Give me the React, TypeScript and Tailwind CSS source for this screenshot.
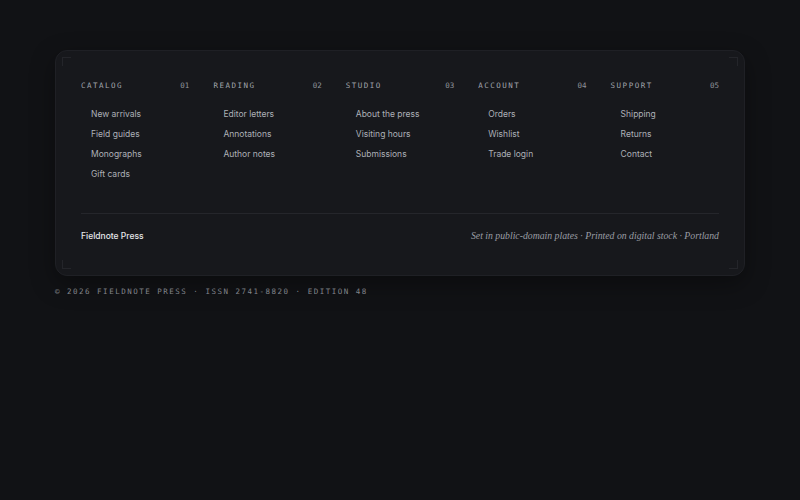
const columns = [
  { title: "Catalog", num: "01", links: ["New arrivals", "Field guides", "Monographs", "Gift cards"] },
  { title: "Reading", num: "02", links: ["Editor letters", "Annotations", "Author notes"] },
  { title: "Studio", num: "03", links: ["About the press", "Visiting hours", "Submissions"] },
  { title: "Account", num: "04", links: ["Orders", "Wishlist", "Trade login"] },
  { title: "Support", num: "05", links: ["Shipping", "Returns", "Contact"] },
];

const mono = "font-['DejaVu_Sans_Mono',monospace]";

export default function App() {
  return (
    <div className="min-h-[500px] w-full bg-[#111215] px-[55px] pt-[50px] font-['Inter',sans-serif]">
      <footer className="relative rounded-xl border border-[#1f2025] bg-[#17181c] px-[25px] pt-[30px] pb-[32px] shadow-[0_8px_24px_rgba(0,0,0,0.35)]">
        {/* corner marks */}
        <span className="absolute left-[6px] top-[6px] h-[9px] w-[9px] border-l border-t border-[#24252a]" />
        <span className="absolute right-[6px] top-[6px] h-[9px] w-[9px] border-r border-t border-[#24252a]" />
        <span className="absolute bottom-[6px] left-[6px] h-[9px] w-[9px] border-b border-l border-[#24252a]" />
        <span className="absolute bottom-[6px] right-[6px] h-[9px] w-[9px] border-b border-r border-[#24252a]" />

        <div className="grid grid-cols-5 gap-x-6">
          {columns.map((col) => (
            <div key={col.title}>
              <div className={`flex items-center justify-between ${mono} text-[7.5px] leading-[10px]`}>
                <span className="uppercase tracking-[0.2em] text-[#a0a4ab]">{col.title}</span>
                <span className="text-[#8f939a]">{col.num}</span>
              </div>
              <ul className="mt-[13px] pl-[10px]">
                {col.links.map((l) => (
                  <li key={l} className="text-[8.5px] leading-[20px] text-[#adb0b7]">
                    {l}
                  </li>
                ))}
              </ul>
            </div>
          ))}
        </div>

        <div className="mt-[29px] border-t border-[#25262b] pt-[15px]">
          <div className="flex items-center justify-between leading-[14px]">
            <span className="text-[8.5px] font-medium text-[#e6e7ea]">Fieldnote Press</span>
            <span className="font-['Liberation_Serif',serif] text-[9.75px] italic text-[#9a9da4]">
              Set in public-domain plates · Printed on digital stock · Portland
            </span>
          </div>
        </div>
      </footer>

      <p className={`mt-[10px] ${mono} text-[7.5px] uppercase leading-[12px] tracking-[0.2em] text-[#8e9198]`}>
        © 2026 Fieldnote Press · ISSN 2741-8820 · Edition 48
      </p>
    </div>
  );
}
